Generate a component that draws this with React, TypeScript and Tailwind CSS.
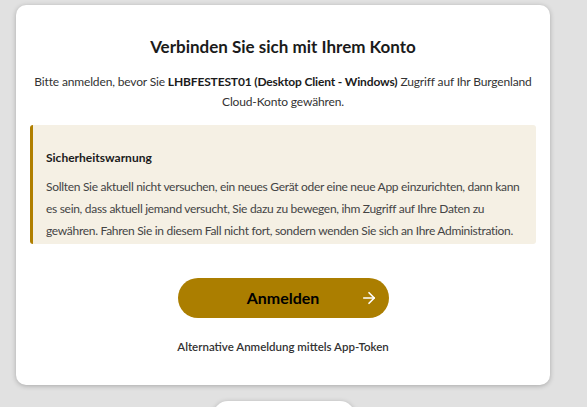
import React from 'react';
import { ArrowRight } from 'lucide-react';

const App: React.FC = () => {
  return (
    <div
      className="h-[407px] w-full overflow-hidden bg-[#e1e1e1] pt-[5px]"
      style={{ fontFamily: 'Lato, "Noto Sans", sans-serif' }}
    >
      <div className="ml-[16px] w-[534px] rounded-[10px] bg-white px-[14px] pb-[30px] pt-[32px] shadow-[0_1px_5px_rgba(0,0,0,0.25)]">
        <h1 className="text-center text-[17px] font-bold leading-[20px] text-[#1b1b1b]">
          Verbinden Sie sich mit Ihrem Konto
        </h1>
        <p className="mt-[15px] text-center text-[12px] leading-[20px] tracking-[-0.15px] text-[#333]">
          Bitte anmelden, bevor Sie <b className="font-bold text-[#1b1b1b]">LHBFESTEST01 (Desktop Client - Windows)</b> Zugriff auf Ihr Burgenland Cloud-Konto gewähren.
        </p>

        <div className="mt-[13px] rounded-[3px] border-l-[3px] border-[#b07f00] bg-[#f5f0e4] pb-[2px] pl-[13px] pr-[8px] pt-[25px]">
          <h2 className="text-[12px] font-bold leading-[16px] text-[#1b1b1b]">Sicherheitswarnung</h2>
          <p className="mt-[10px] text-[12px] leading-[22px] tracking-[-0.3px] text-[#444]">
            Sollten Sie aktuell nicht versuchen, ein neues Gerät oder eine neue App einzurichten, dann kann es sein, dass aktuell jemand versucht, Sie dazu zu bewegen, ihm Zugriff auf Ihre Daten zu gewähren. Fahren Sie in diesem Fall nicht fort, sondern wenden Sie sich an Ihre Administration.
          </p>
        </div>

        <div className="mt-[34px] flex justify-center">
          <button className="relative flex h-[40px] w-[211px] items-center justify-center rounded-full bg-[#ab7e00] text-[16px] font-bold text-black">
            Anmelden
            <ArrowRight className="absolute right-[11px] top-1/2 h-[18px] w-[18px] -translate-y-1/2 text-white" strokeWidth={2.2} />
          </button>
        </div>

        <p className="mt-[20px] text-center text-[11.5px] font-semibold text-[#333]">
          Alternative Anmeldung mittels App-Token
        </p>
      </div>

      <div className="ml-[213px] mt-[16px] h-[30px] w-[142px] rounded-[20px] bg-white shadow-[0_1px_5px_rgba(0,0,0,0.25)]" />
    </div>
  );
};

export default App;
